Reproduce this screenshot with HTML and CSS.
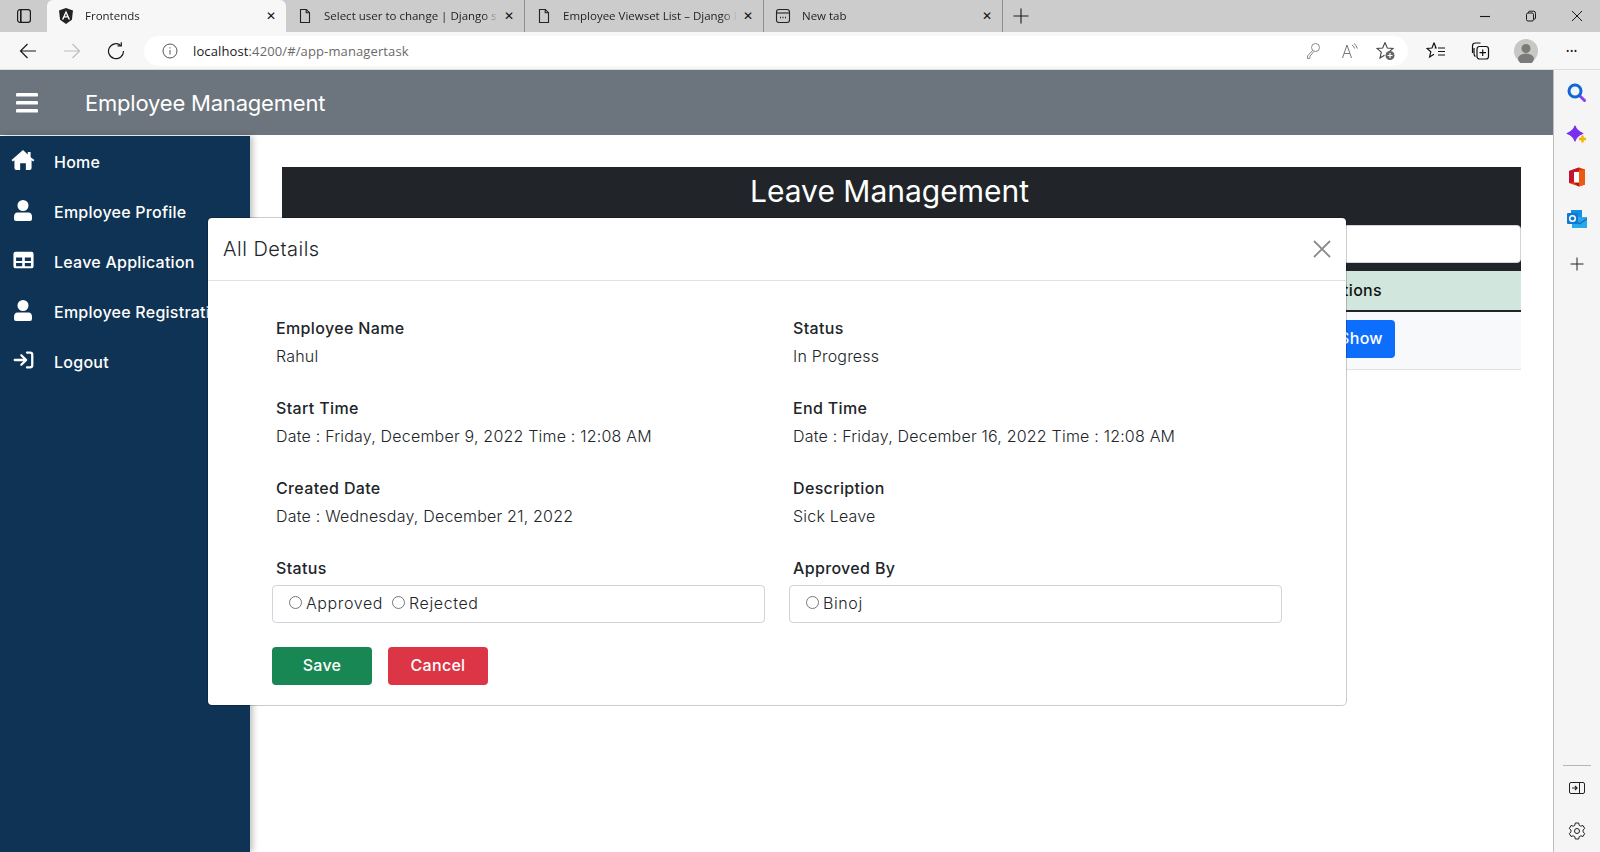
FILE: index.html
```html
<!DOCTYPE html>
<html lang="en">
<head>
    <meta charset="utf-8">
    <meta name="viewport" content="width=device-width, initial-scale=1.0">
    <title>Frontends</title>
    <link rel="stylesheet" href="styles.css">
</head>
<body>
<div class="window">
    <!-- browser tabs -->
    <div class="tabstrip">
        <div class="tab-toggle">
            <svg width="16" height="16" viewBox="0 0 16 16" fill="none" stroke="#1a1a1a" stroke-width="1.2"><rect x="1.6" y="1.6" width="12.8" height="12.8" rx="2.4"/><path d="M4.800 2v12" stroke-width="1.600"/></svg>
        </div>
        <div class="tab tab-active">
            <svg class="tab-icon" width="16" height="16" viewBox="0 0 16 16"><path d="M8 0 1 2.4l1.1 9.3L8 16l5.900-4.300L15 2.400z" fill="#222"/><path d="M8 2.400 3.900 11.600h1.600l.8-2.100h3.400l.8 2.100h1.600zM7 8.200 8 5.600l1 2.600z" fill="#fff"/></svg>
            <span class="tab-title">Frontends</span>
            <span class="tab-close">&#10005;</span>
        </div>
        <div class="tab">
            <svg class="tab-icon" width="16" height="16" viewBox="0 0 16 16" fill="none" stroke="#222" stroke-width="1.1"><path d="M3.500 1.500h5.800l3.200 3.200v9.800h-9z"/><path d="M9.200 1.500v3.300h3.300"/></svg>
            <span class="tab-title">Select user to change | Django site admin</span>
            <span class="tab-close">&#10005;</span>
        </div>
        <div class="tab">
            <svg class="tab-icon" width="16" height="16" viewBox="0 0 16 16" fill="none" stroke="#222" stroke-width="1.1"><path d="M3.500 1.500h5.800l3.200 3.200v9.800h-9z"/><path d="M9.200 1.500v3.300h3.300"/></svg>
            <span class="tab-title">Employee Viewset List &ndash; Django REST</span>
            <span class="tab-close">&#10005;</span>
        </div>
        <div class="tab">
            <svg class="tab-icon" width="16" height="16" viewBox="0 0 16 16" fill="none" stroke="#222" stroke-width="1.1"><rect x="1.500" y="1.500" width="13" height="13" rx="2.500"/><path d="M2 5h12"/><path d="M5 9.500h1M7.500 9.500h1M10 9.500h1" stroke-width="1.400"/></svg>
            <span class="tab-title">New tab</span>
            <span class="tab-close">&#10005;</span>
        </div>
        <div class="tab-new">
            <svg width="16" height="16" viewBox="0 0 16 16" stroke="#1a1a1a" stroke-width="1.1"><path d="M8 .5v15M.5 8h15"/></svg>
        </div>
        <div class="win-controls">
            <svg width="12" height="12" viewBox="0 0 12 12" stroke="#1a1a1a" stroke-width="1.1"><path d="M1 6.500h10"/></svg>
            <svg width="12" height="12" viewBox="0 0 12 12" fill="none" stroke="#1a1a1a" stroke-width="1"><rect x="1.500" y="3" width="7" height="8" rx="1.500"/><path d="M3.500 3v-.8q0-1 1-1h4q2 0 2 2v5q0 1-1.800 1"/></svg>
            <svg width="12" height="12" viewBox="0 0 12 12" stroke="#1a1a1a" stroke-width="1"><path d="m1 1 10 10M11 1 1 11"/></svg>
        </div>
    </div>

    <!-- address bar -->
    <div class="toolbar">
        <div class="nav-btns">
            <svg width="18" height="18" viewBox="0 0 18 18" fill="none" stroke="#1a1a1a" stroke-width="1.2"><path d="M17 9H1.500M8.500 2l-7 7 7 7"/></svg>
            <svg width="18" height="18" viewBox="0 0 18 18" fill="none" stroke="#bdbdbd" stroke-width="1.2"><path d="M1 9h15.500M9.500 2l7 7-7 7"/></svg>
            <svg width="18" height="18" viewBox="0 0 18 18" fill="none" stroke="#1a1a1a" stroke-width="1.2"><path d="M14 3.600A7.500 7.500 0 1 0 16.500 9"/><path d="M14.300 .3v3.500h-3.800"/></svg>
        </div>
        <div class="address">
            <svg class="info-icon" width="16" height="16" viewBox="0 0 16 16" fill="none" stroke="#555" stroke-width="1"><circle cx="8" cy="8" r="7"/><path d="M8 7v4.500M8 4.200v1.300"/></svg>
            <span class="url"><span class="url-host">localhost</span>:4200/#/app-managertask</span>
            <div class="address-icons">
                <svg width="16" height="18" viewBox="0 0 16 18" fill="none" stroke="#8a8a8a" stroke-width="1"><circle cx="10.500" cy="5.500" r="4"/><path d="M7.600 8.400 2.500 14v2.500h2.200l.4-2.400 3.600-4.600"/></svg>
                <svg width="18" height="18" viewBox="0 0 18 18" fill="none" stroke="#777" stroke-width="1"><path d="m1.500 16 4.500-13 4.500 13M3.200 11.500h5.600"/><path d="M11 3q2.200 1.200 2.500 3.500M13 1.500q2.800 1.800 3.200 5"/></svg>
                <svg class="star-add" width="20" height="20" viewBox="0 0 20 20" fill="none" stroke="#444" stroke-width="1.100"><path d="M9 1.500 11.300 7l5.700.5-4.300 3.600"/><path d="M9 1.500 6.700 7 1 7.500l4.300 3.700L4 17l4.500-2.700"/><circle cx="14" cy="14.500" r="4.500" fill="#666" stroke="none"/><path d="M14 12v5M11.500 14.500h5" stroke="#fff" stroke-width="1.200"/></svg>
            </div>
        </div>
        <div class="toolbar-icons">
            <svg width="20" height="20" viewBox="0 0 20 20" fill="none" stroke="#111" stroke-width="1.200"><path d="M8 1.800 10 7H8.600M8 1.800 6 7l-5 .4 3.800 3.400L3.600 16 8 13.200"/><path d="M12 7h7M12 10.500h7M12 14h7"/></svg>
            <svg width="20" height="20" viewBox="0 0 20 20" fill="none" stroke="#111" stroke-width="1.200"><path d="M2.500 12V5q0-3 3-3h5"/><path d="M5.500 15.500q-1.500-1-1.500-3V7"/><rect x="7" y="5.500" width="11.500" height="12.500" rx="2.500"/><path d="M12.700 8.500V15M9.500 11.700H16"/></svg>
            <div class="avatar">
                <svg width="24" height="24" viewBox="0 0 24 24"><circle cx="12" cy="12" r="12" fill="#c9c7c4"/><circle cx="12" cy="9.500" r="4.500" fill="#7b7b7b"/><ellipse cx="12" cy="20" rx="8" ry="5.500" fill="#7b7b7b"/></svg>
            </div>
            <span class="more">&#8226;&#8226;&#8226;</span>
        </div>
    </div>

    <div class="content">
        <div class="page">
            <header class="app-header">
                <svg class="burger" width="22" height="20" viewBox="0 0 22 20" fill="#fff"><rect width="22" height="3.600" rx="1.200"/><rect y="8" width="22" height="3.600" rx="1.200"/><rect y="16" width="22" height="3.600" rx="1.200"/></svg>
                <span class="app-title">Employee Management</span>
            </header>

            <div class="app-body">
                <nav class="sidenav">
                    <a class="nav-item">
                        <span class="nav-icon"><svg width="24" height="20" viewBox="0 0 24 21" fill="#fff"><path d="M12 0 0 10.500 1.300 12 3 10.700V19q0 2 2 2h4v-7h6v7h4q2 0 2-2v-8.300l1.700 1.300 1.300-1.500L20 7.500V2h-3v2.800z"/></svg></span>
                        <span>Home</span>
                    </a>
                    <a class="nav-item">
                        <span class="nav-icon"><svg width="24" height="21" viewBox="0 0 24 21" fill="#fff"><circle cx="12" cy="5.500" r="5.500"/><path d="M6.500 12.500h11q3.500 0 3.500 4.500v2q0 2-2 2H5q-2 0-2-2v-2q0-4.500 3.500-4.500z"/></svg></span>
                        <span>Employee Profile</span>
                    </a>
                    <a class="nav-item">
                        <span class="nav-icon"><svg width="21" height="18" viewBox="0 0 24 20" fill="#fff"><path fill-rule="evenodd" d="M3 .500h18q2.500 0 2.500 2.500v14q0 2.500-2.500 2.500H3Q.5 19.500.5 17V3Q.5.500 3 .500zM3.500 7v4h7V7zm10 0v4h7V7zm-10 6.500V17h7v-3.500zm10 0V17h7v-3.500z"/></svg></span>
                        <span>Leave Application</span>
                    </a>
                    <a class="nav-item">
                        <span class="nav-icon"><svg width="24" height="21" viewBox="0 0 24 21" fill="#fff"><circle cx="12" cy="5.500" r="5.500"/><path d="M6.500 12.500h11q3.500 0 3.500 4.500v2q0 2-2 2H5q-2 0-2-2v-2q0-4.500 3.500-4.500z"/></svg></span>
                        <span>Employee Registration</span>
                    </a>
                    <a class="nav-item">
                        <span class="nav-icon"><svg width="21" height="18" viewBox="0 0 24 20" fill="none" stroke="#fff" stroke-width="2.600" stroke-linecap="round" stroke-linejoin="round"><path d="M2 10h12M9.500 4.500l5.500 5.500-5.500 5.500"/><path d="M16 1.500h3.500q2.500 0 2.500 2.500v12q0 2.500-2.500 2.500H16"/></svg></span>
                        <span>Logout</span>
                    </a>
                </nav>

                <main class="main">
                    <div class="panel-head">
                        <h2 class="panel-title">Leave Management</h2>
                        <input class="search-box" type="text">
                    </div>
                    <table class="task-table">
                        <thead>
                            <tr><th>Employee Name</th><th>Status</th><th class="col-actions">Actions</th></tr>
                        </thead>
                        <tbody>
                            <tr><td>Rahul</td><td>In Progress</td><td class="col-actions"><button class="btn btn-show">Show</button></td></tr>
                        </tbody>
                    </table>
                </main>
            </div>

            <!-- the dialog sits on top of the page -->
            <div class="modal">
                <div class="modal-header">
                    <h5 class="modal-title">All Details</h5>
                    <svg class="modal-close" width="18" height="18" viewBox="0 0 18 18" stroke="#8a8a8a" stroke-width="1.800"><path d="m1 1 16 16M17 1 1 17"/></svg>
                </div>
                <div class="modal-body">
                    <div class="detail-grid">
                        <div class="detail">
                            <div class="detail-label">Employee Name</div>
                            <div class="detail-value">Rahul</div>
                        </div>
                        <div class="detail">
                            <div class="detail-label">Status</div>
                            <div class="detail-value">In Progress</div>
                        </div>
                        <div class="detail">
                            <div class="detail-label">Start Time</div>
                            <div class="detail-value">Date : Friday, December 9, 2022 Time : 12:08 AM</div>
                        </div>
                        <div class="detail">
                            <div class="detail-label">End Time</div>
                            <div class="detail-value">Date : Friday, December 16, 2022 Time : 12:08 AM</div>
                        </div>
                        <div class="detail">
                            <div class="detail-label">Created Date</div>
                            <div class="detail-value">Date : Wednesday, December 21, 2022</div>
                        </div>
                        <div class="detail">
                            <div class="detail-label">Description</div>
                            <div class="detail-value">Sick Leave</div>
                        </div>
                        <div class="field">
                            <div class="detail-label">Status</div>
                            <div class="radio-box">
                                <label><input type="radio" name="status">Approved</label>
                                <label><input type="radio" name="status">Rejected</label>
                            </div>
                        </div>
                        <div class="field">
                            <div class="detail-label">Approved By</div>
                            <div class="radio-box">
                                <label><input type="radio" name="approver">Binoj</label>
                            </div>
                        </div>
                    </div>
                    <div class="modal-actions">
                        <button class="btn btn-save">Save</button>
                        <button class="btn btn-cancel">Cancel</button>
                    </div>
                </div>
            </div>
        </div>

        <!-- edge sidebar -->
        <aside class="edgebar">
            <div class="edge-icon">
                <svg width="20" height="20" viewBox="0 0 20 20" fill="none"><path d="m12.500 12.500 5 5" stroke="#8a3ff0" stroke-width="3" stroke-linecap="round"/><circle cx="8" cy="8" r="6" stroke="#1166d8" stroke-width="3"/></svg>
            </div>
            <div class="edge-icon">
                <svg width="22" height="22" viewBox="0 0 22 22"><path d="M9 2q1.200 5 7.800 7.500Q10.200 12 9 17 7.800 12 1.200 9.500 7.800 7 9 2z" fill="#7a2ff0" stroke="#7a2ff0" stroke-width="1.200" stroke-linejoin="round"/><path d="M16.500 11.500v7M13 15h7" stroke="#f4b400" stroke-width="2.400"/></svg>
            </div>
            <div class="edge-icon">
                <svg width="18" height="20" viewBox="0 0 18 20"><path d="M11 .500 1 4v12l10 3.500 6-2v-15z" fill="#d83b01"/><path d="M11 .500 1 4v12l5-1.500v-9L11 4z" fill="#c4122f"/><path d="m5 14.500 6 5V16z" fill="#a80f2b"/><rect x="6" y="5" width="5" height="10.500" fill="#fff"/><path d="m11 3.500 6-1v15l-6 2z" fill="#eb5a14"/></svg>
            </div>
            <div class="edge-icon">
                <svg width="20" height="18" viewBox="0 0 20 18"><rect x="4" width="11" height="8" fill="#1490df"/><path d="M5 7h15v11H5z" fill="#28a8ea"/><path d="m5 8 7.500 5L20 8v1.500l-7.500 5L5 9.500z" fill="#0f6cbd"/><rect y="3" width="11" height="11" rx="1" fill="#0f78d4"/><circle cx="5.500" cy="8.500" r="2.800" fill="none" stroke="#fff" stroke-width="1.500"/></svg>
            </div>
            <div class="edge-icon edge-add">
                <svg width="14" height="14" viewBox="0 0 14 14" stroke="#222" stroke-width="1"><path d="M7 .5v13M.5 7h13"/></svg>
            </div>
            <div class="edge-spacer"></div>
            <div class="edge-rule"></div>
            <div class="edge-icon">
                <svg width="16" height="14" viewBox="0 0 16 14" fill="none" stroke="#222" stroke-width="1"><rect x=".5" y=".5" width="15" height="11" rx="1.500"/><path d="M10.500 .5v11"/><path d="M3 6h5M6 4l2 2-2 2" stroke-width="1.200"/></svg>
            </div>
            <div class="edge-icon">
                <svg width="18" height="18" viewBox="0 0 18 18" fill="none" stroke="#222" stroke-width="1"><path d="M7.300 1h3.400l.5 2.300 1.600.9 2.200-.7 1.700 3-1.700 1.600v1.800l1.700 1.600-1.700 3-2.200-.7-1.600.9-.5 2.300H7.300l-.5-2.300-1.600-.9-2.200.7-1.700-3L3 9.900V8.100L1.300 6.500l1.700-3 2.200.7 1.600-.9z"/><circle cx="9" cy="9" r="2.500"/></svg>
            </div>
        </aside>
    </div>
</div>
</body>
</html>
```

FILE: styles.css
```css
* {
    box-sizing: border-box;
}
body {
    margin: 0;
    background-color: #fff;
    font-family: Inter, "Noto Sans", sans-serif;
    color: #212529;
    overflow: hidden;
}
.window {
    display: flex;
    flex-direction: column;
    width: 1600px;
    height: 852px;
}

/* browser chrome */
.tabstrip {
    display: flex;
    align-items: flex-end;
    height: 32px;
    background-color: #cccccc;
    font-family: "Open Sans", sans-serif;
    font-size: 11.5px;
    color: #1f1f1f;
}
.tab-toggle {
    display: flex;
    align-items: center;
    justify-content: center;
    width: 47px;
    height: 32px;
}
.tab {
    display: flex;
    align-items: center;
    width: 239px;
    height: 32px;
    padding: 0 10px 1px 11px;
    border-right: 1px solid #8e8e8e;
}
.tab-active {
    border-right: none;
    border-radius: 6px 6px 0 0;
    background-color: #f7f7f7;
}
.tab-icon {
    flex-shrink: 0;
    margin-right: 11px;
}
.tab-title {
    flex: 1;
    overflow: hidden;
    white-space: nowrap;
    -webkit-mask-image: linear-gradient(to right, #000 92%, transparent 100%);
    mask-image: linear-gradient(to right, #000 92%, transparent 100%);
}
.tab-close {
    flex-shrink: 0;
    margin-left: 6px;
    font-size: 12px;
    color: #111;
}
.tab-new {
    display: flex;
    align-items: center;
    justify-content: center;
    width: 36px;
    height: 32px;
}
.win-controls {
    display: flex;
    align-items: center;
    gap: 34px;
    height: 32px;
    margin-left: auto;
    padding-right: 17px;
}
.toolbar {
    display: flex;
    align-items: center;
    height: 38px;
    background-color: #f7f7f7;
    border-bottom: 1px solid #dcdcdc;
    font-family: "Open Sans", sans-serif;
}
.nav-btns {
    display: flex;
    align-items: center;
    gap: 26px;
    width: 144px;
    padding-left: 19px;
}
.address {
    display: flex;
    align-items: center;
    width: 1264px;
    height: 30px;
    padding: 0 12px 0 18px;
    border-radius: 15px;
    background-color: #fff;
    font-size: 13px;
    letter-spacing: 0.12px;
    color: #6a6a6a;
}
.info-icon {
    margin-right: 15px;
}
.url-host {
    color: #1a1a1a;
}
.address-icons {
    display: flex;
    align-items: center;
    gap: 20px;
    margin-left: auto;
}
.star-add {
    margin-left: -3px;
}
.toolbar-icons {
    display: flex;
    align-items: center;
    flex: 1;
    padding-left: 18px;
    gap: 24px;
}
.avatar {
    display: flex;
}
.more {
    margin-left: 4px;
    font-size: 9px;
    letter-spacing: 0.5px;
    color: #111;
}

/* page */
.content {
    display: flex;
    flex: 1;
    min-height: 0;
}
.page {
    position: relative;
    display: flex;
    flex-direction: column;
    flex: 1;
    min-width: 0;
}
.app-header {
    display: flex;
    align-items: center;
    flex-shrink: 0;
    height: 65px;
    margin-bottom: 1px;
    padding-left: 16px;
    background-color: #6c757d;
    color: #fff;
}
.burger {
    margin-right: 47px;
}
.app-title {
    font-size: 22px;
    letter-spacing: -0.2px;
}
.app-body {
    display: flex;
    flex: 1;
    min-height: 0;
}
.sidenav {
    flex-shrink: 0;
    width: 250px;
    padding-top: 1px;
    background-color: #0f3354;
    box-shadow: 3px 0 6px rgba(0, 0, 0, 0.24);
    color: #fff;
    overflow: hidden;
}
.nav-item {
    display: flex;
    align-items: center;
    height: 50px;
    padding-left: 11px;
    font-size: 16px;
    font-weight: 500;
    letter-spacing: 0.25px;
    white-space: nowrap;
}
.nav-icon {
    display: flex;
    justify-content: center;
    flex-shrink: 0;
    width: 24px;
    margin: 0 19px 4px 0;
}
.main {
    flex: 1;
    padding: 31px 32px 0;
    min-width: 0;
}
.panel-head {
    padding-bottom: 8px;
    background-color: #212529;
}
.panel-title {
    margin: 0;
    height: 58px;
    padding-right: 24px;
    font-size: 30px;
    font-weight: 400;
    line-height: 48px;
    text-align: center;
    color: #fff;
}
.search-box {
    display: block;
    width: 100%;
    height: 38px;
    border: 1px solid #ced4da;
    border-radius: 4px;
    background-color: #fff;
}
.task-table {
    width: 100%;
    border-collapse: collapse;
    font-size: 16px;
}
.task-table th {
    height: 40px;
    padding: 0 8px 2px;
    background-color: #d1e7dd;
    border-bottom: 2px solid #212529;
    text-align: left;
    font-weight: 500;
    letter-spacing: 0.3px;
    color: #111;
}
.task-table td {
    height: 58px;
    padding: 0 8px 3px;
    background-color: #f8f9fa;
    border-bottom: 1px solid #dee2e6;
}
.col-actions {
    width: 219px;
}
.task-table th.col-actions {
    padding-left: 20px;
}
.task-table td.col-actions {
    padding-left: 25px;
}
.btn {
    height: 38px;
    padding-bottom: 3px;
    border: none;
    border-radius: 4px;
    font-family: inherit;
    font-size: 16px;
    font-weight: 500;
    letter-spacing: 0.3px;
    color: #fff;
}
.btn-show {
    width: 68px;
    background-color: #0d6efd;
}
.btn-save {
    width: 100px;
    background-color: #198754;
}
.btn-cancel {
    width: 100px;
    background-color: #dc3545;
}

/* dialog */
.modal {
    position: absolute;
    top: 147px;
    left: 207px;
    width: 1140px;
    height: 489px;
    border: 1px solid rgba(0, 0, 0, 0.2);
    border-radius: 5px;
    background-color: #fff;
    background-clip: padding-box;
}
.modal-header {
    display: flex;
    align-items: center;
    justify-content: space-between;
    height: 63px;
    padding: 0 15px;
    border-bottom: 1px solid #dee2e6;
}
.modal-title {
    margin: 0;
    font-size: 20px;
    font-weight: 300;
    letter-spacing: 0.5px;
}
.modal-body {
    padding: 33px 63px 0 64px;
}
.detail-grid {
    display: grid;
    grid-template-columns: 493px 493px;
    column-gap: 24px;
}
.detail {
    height: 80px;
    padding: 0 4px;
}
.detail-label {
    padding-left: 4px;
    font-size: 16px;
    font-weight: 500;
    letter-spacing: 0.35px;
    line-height: 28px;
}
.detail .detail-label,
.detail .detail-value {
    padding-left: 0;
}
.field .detail-label {
    margin-bottom: 3px;
}
.detail-value {
    font-size: 16px;
    font-weight: 300;
    letter-spacing: 0.2px;
    line-height: 28px;
}
.radio-box {
    display: flex;
    align-items: center;
    gap: 6px;
    height: 38px;
    padding: 0 0 2px 13px;
    border: 1px solid #ced4da;
    border-radius: 4px;
    font-size: 16px;
    font-weight: 300;
    letter-spacing: 0.6px;
}
.radio-box label {
    display: flex;
    align-items: center;
}
.radio-box input {
    margin: 0 4px 1px 3px;
}
.modal-actions {
    display: flex;
    gap: 16px;
    margin-top: 24px;
}

/* edge sidebar */
.edgebar {
    display: flex;
    flex-direction: column;
    flex-shrink: 0;
    align-items: center;
    width: 47px;
    padding-top: 2px;
    border-left: 1px solid #bdbdbd;
    background-color: #f5f5f5;
}
.edge-icon {
    display: flex;
    align-items: center;
    justify-content: center;
    flex-shrink: 0;
    width: 42px;
    height: 42px;
}
.edge-add {
    margin-top: 3px;
}
.edge-spacer {
    flex: 1;
}
.edge-rule {
    width: 28px;
    height: 1px;
    margin-bottom: 2px;
    background-color: #b5b5b5;
}
```
